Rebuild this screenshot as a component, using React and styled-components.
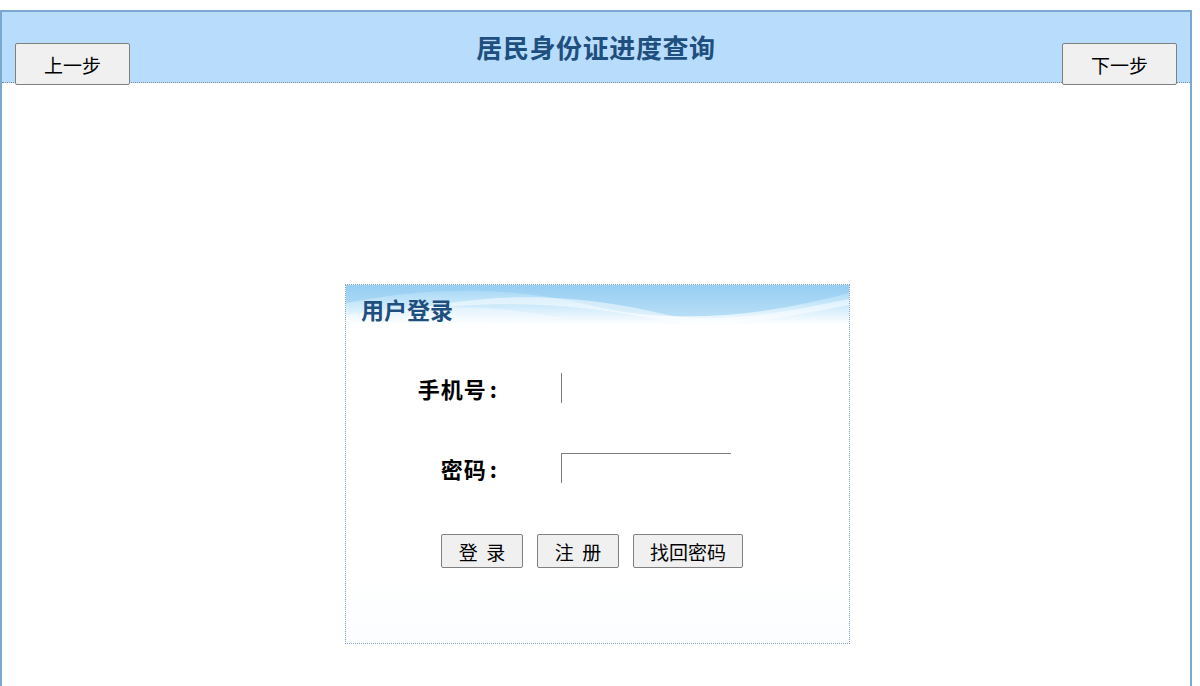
import React from 'react'
import styled, { createGlobalStyle } from 'styled-components'

const GlobalStyle = createGlobalStyle`
  html, body {
    margin: 0;
    padding: 0;
    background: #ffffff;
    font-family: "Noto Sans CJK SC", "Noto Sans", sans-serif;
  }
`

const Frame = styled.div`
  margin-top: 10px;
  width: 1188px;
  min-height: 674px;
  border: 2px solid #7aa8d0;
  border-bottom: none;
  box-sizing: content-box;
`

const TopBar = styled.div`
  height: 70px;
  background: #b8dcfc;
  border-bottom: 1px dotted #7f8fa0;
  display: flex;
  align-items: flex-end;
  justify-content: space-between;
  padding: 0 13px;
`

const Title = styled.h1`
  align-self: center;
  margin: -2px 0 0 0;
  font-size: 26px;
  font-weight: 700;
  color: #1f4f7f;
  letter-spacing: 0.6px;
`

const StepButton = styled.button`
  width: 115px;
  height: 42px;
  margin-bottom: -3px;
  position: relative;
  z-index: 1;
  background: #f0f0f0;
  border: 1px solid #808080;
  border-radius: 2px;
  font-family: "Noto Sans CJK SC", sans-serif;
  font-size: 19px;
  color: #000;
  padding: 0;
`

const Body = styled.div`
  display: flex;
  justify-content: center;
  padding: 201px 0 0 3px;
`

const LoginBox = styled.div`
  width: 503px;
  height: 358px;
  border: 1px dotted #7f9fbf;
  background: linear-gradient(#ffffff 0%, #ffffff 80%, #fbfdff 100%);
  display: flex;
  flex-direction: column;
`

const BoxHead = styled.div`
  position: relative;
  height: 40px;
  background: linear-gradient(#9fd3f4 0%, #c6e7fa 45%, #ffffff 100%);
  overflow: hidden;
  display: flex;
  align-items: center;
  padding-left: 15px;
`

const Waves = styled.svg`
  position: absolute;
  left: 0;
  top: 0;
  width: 100%;
  height: 100%;
`

const BoxTitle = styled.h2`
  position: relative;
  margin: 8px 0 0 0;
  font-size: 23px;
  font-weight: 700;
  color: #1f4f7f;
`

const Form = styled.div`
  display: grid;
  grid-template-columns: 152px 170px;
  column-gap: 63px;
  row-gap: 50px;
  padding-top: 48px;
`

const Label = styled.label`
  text-align: right;
  font-size: 22px;
  font-weight: 700;
  color: #000;
  line-height: 30px;
  height: 30px;
  letter-spacing: 1px;

  span {
    margin-left: 3px;
  }
`

const Field = styled.input`
  height: 30px;
  width: 170px;
  box-sizing: border-box;
  border: none;
  border-left: 1px solid #808080;
  border-top: ${p => (p.$top ? '1px solid #808080' : 'none')};
  outline: none;
  background: transparent;
  padding: 0 4px;
  font-size: 16px;
`

const Actions = styled.div`
  display: flex;
  gap: 14px;
  padding-left: 95px;
  margin-top: 51px;
`

const ActionButton = styled.button`
  width: ${p => p.$w}px;
  height: 34px;
  background: #f0f0f0;
  border: 1px solid #808080;
  border-radius: 2px;
  font-family: "Noto Sans CJK SC", sans-serif;
  font-size: 19px;
  color: #000;
  padding: 0;
  white-space: pre;
`

export default function App() {
  return (
    <>
      <GlobalStyle />
      <Frame>
        <TopBar>
          <StepButton>上一步</StepButton>
          <Title>居民身份证进度查询</Title>
          <StepButton>下一步</StepButton>
        </TopBar>
        <Body>
          <LoginBox>
            <BoxHead>
              <Waves viewBox="0 0 500 40" preserveAspectRatio="none">
                <path d="M0 18 C90 0 170 2 250 22 C330 40 420 30 500 8 L500 0 L0 0 Z" fill="#8fcbf0" opacity="0.55" />
                <path d="M60 26 C150 6 230 8 320 30 C380 40 450 24 500 14 L500 20 C440 32 380 44 320 36 C230 18 150 14 60 26 Z" fill="#ffffff" opacity="0.5" />
                <path d="M0 30 C80 18 150 20 220 34 L0 40 Z" fill="#ffffff" opacity="0.35" />
              </Waves>
              <BoxTitle>用户登录</BoxTitle>
            </BoxHead>
            <Form>
              <Label>手机号<span>:</span></Label>
              <Field />
              <Label>密码<span>:</span></Label>
              <Field type="password" $top />
            </Form>
            <Actions>
              <ActionButton $w={82}>登  录</ActionButton>
              <ActionButton $w={82}>注  册</ActionButton>
              <ActionButton $w={110}>找回密码</ActionButton>
            </Actions>
          </LoginBox>
        </Body>
      </Frame>
    </>
  )
}
